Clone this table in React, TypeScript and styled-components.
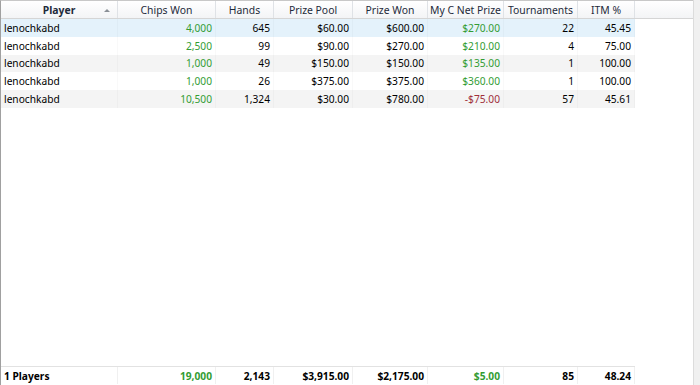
import React from "react";
import styled, { createGlobalStyle } from "styled-components";

const Global = createGlobalStyle`
  html, body { margin: 0; padding: 0; background: #fff; }
  body { font-family: "Noto Sans", "DejaVu Sans", sans-serif; font-size: 10.2px; color: #000; }
`;

const COLS = "117px 98px 58px 79px 75px 76px 74px 57px";

const Frame = styled.div`
  width: 700px;
  height: 385px;
  display: flex;
  overflow: hidden;
`;

const Main = styled.div`
  flex: 1;
  display: flex;
  flex-direction: column;
  border-left: 1px solid #a0a0a0;
  border-top: 1px solid #c8c8c8;
`;

const Strip = styled.div`
  width: 6px;
  background: #f0f0f0;
  border-left: 1px solid #dcdcdc;
`;

const HeaderBar = styled.div`
  display: flex;
  height: 17px;
  background: linear-gradient(#ffffff, #f3f4f6);
  border-bottom: 1px solid #d5d5d5;
`;

const HeaderGrid = styled.div`
  display: grid;
  grid-template-columns: ${COLS};
`;

const HeaderCell = styled.div<{ $bold?: boolean }>`
  position: relative;
  display: flex;
  align-items: center;
  justify-content: center;
  font-weight: ${(p) => (p.$bold ? 700 : 400)};
  font-size: 10.4px;
  color: #1e2a3a;
  border-right: 1px solid #dfe2e6;
  white-space: nowrap;
  overflow: hidden;
`;

const SortArrow = styled.span`
  position: absolute;
  right: 7px;
  top: 8px;
  width: 0;
  height: 0;
  border-left: 3px solid transparent;
  border-right: 3px solid transparent;
  border-bottom: 3px solid #8a8f96;
`;

const Body = styled.div`
  flex: 1;
`;

const Row = styled.div<{ $bg: string }>`
  display: grid;
  grid-template-columns: ${COLS};
  height: 17.8px;
  width: 634px;
  background: ${(p) => p.$bg};
`;

const Cell = styled.div<{ $color?: string; $left?: boolean }>`
  display: flex;
  align-items: center;
  justify-content: ${(p) => (p.$left ? "flex-start" : "flex-end")};
  padding: ${(p) => (p.$left ? "0 0 0 3px" : "0 3px 0 0")};
  color: ${(p) => p.$color || "#000"};
  border-right: 1px solid rgba(0, 0, 0, 0.025);
  white-space: nowrap;
`;

const Footer = styled.div`
  display: grid;
  grid-template-columns: ${COLS};
  width: 634px;
  height: 17px;
  border-top: 1px solid #e2e2e2;
  font-weight: 700;
  margin-bottom: 1px;
`;

const FootCell = styled(Cell)`
  border-right: 1px solid #f0f0f0;
`;

const GREEN = "#339c33";
const RED = "#a0303a";

type R = [string, string, string, string, string, string, string, string];
const rows: { d: R; net: string }[] = [
  { d: ["lenochkabd", "4,000", "645", "$60.00", "$600.00", "$270.00", "22", "45.45"], net: GREEN },
  { d: ["lenochkabd", "2,500", "99", "$90.00", "$270.00", "$210.00", "4", "75.00"], net: GREEN },
  { d: ["lenochkabd", "1,000", "49", "$150.00", "$150.00", "$135.00", "1", "100.00"], net: GREEN },
  { d: ["lenochkabd", "1,000", "26", "$375.00", "$375.00", "$360.00", "1", "100.00"], net: GREEN },
  { d: ["lenochkabd", "10,500", "1,324", "$30.00", "$780.00", "-$75.00", "57", "45.61"], net: RED },
];

const bgs = ["#e4f2fb", "#ffffff", "#f4f4f4", "#ffffff", "#f4f4f4"];

const headers = ["Player", "Chips Won", "Hands", "Prize Pool", "Prize Won", "My C Net Prize", "Tournaments", "ITM %"];

export default function App() {
  return (
    <>
      <Global />
      <Frame>
        <Main>
          <HeaderBar>
            <HeaderGrid>
              {headers.map((h, i) => (
                <HeaderCell key={h} $bold={i === 0}>
                  {h}
                  {i === 0 && <SortArrow />}
                </HeaderCell>
              ))}
            </HeaderGrid>
          </HeaderBar>
          <Body>
            {rows.map((r, i) => (
              <Row key={i} $bg={bgs[i]}>
                <Cell $left>{r.d[0]}</Cell>
                <Cell $color={GREEN}>{r.d[1]}</Cell>
                <Cell>{r.d[2]}</Cell>
                <Cell>{r.d[3]}</Cell>
                <Cell>{r.d[4]}</Cell>
                <Cell $color={r.net}>{r.d[5]}</Cell>
                <Cell>{r.d[6]}</Cell>
                <Cell>{r.d[7]}</Cell>
              </Row>
            ))}
          </Body>
          <Footer>
            <FootCell $left>1 Players</FootCell>
            <FootCell $color={GREEN}>19,000</FootCell>
            <FootCell>2,143</FootCell>
            <FootCell>$3,915.00</FootCell>
            <FootCell>$2,175.00</FootCell>
            <FootCell $color={GREEN}>$5.00</FootCell>
            <FootCell>85</FootCell>
            <FootCell>48.24</FootCell>
          </Footer>
        </Main>
        <Strip />
      </Frame>
    </>
  );
}
